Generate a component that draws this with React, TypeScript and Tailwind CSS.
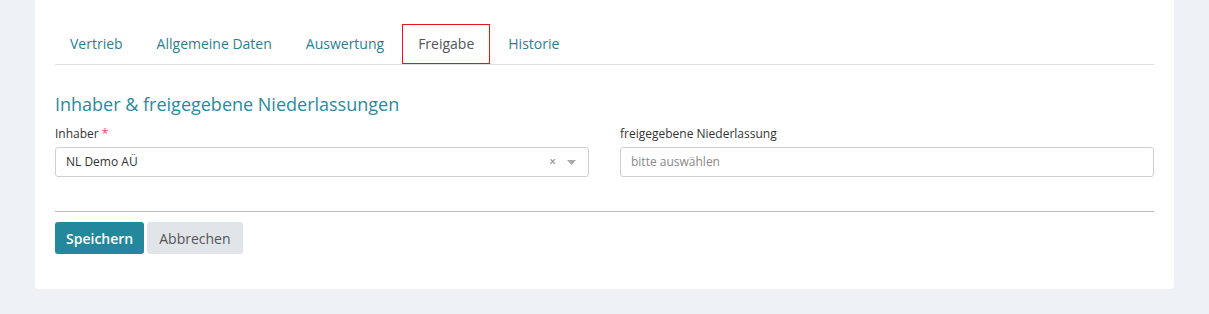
import React from 'react';

const tabs = ['Vertrieb', 'Allgemeine Daten', 'Auswertung', 'Freigabe', 'Historie'];

export default function App() {
  return (
    <div
      className="min-h-[314px] bg-[#eef1f5] px-[35px] pb-[25px]"
      style={{ fontFamily: '"Open Sans", "Liberation Sans", sans-serif' }}
    >
      <div className="bg-white rounded-b-[4px] px-[20px] pt-[24px] pb-[35px]">
        {/* tabs */}
        <ul className="flex border-b border-[#dcdfe3]">
          {tabs.map((t, i) => (
            <li key={t} className="mr-[2px]">
              {t === 'Freigabe' ? (
                <span className="block h-[40px] px-[15px] leading-[38px] text-[14px] text-[#555] border border-[#e8141b]">
                  {t}
                </span>
              ) : (
                <span
                  className={
                    'block h-[40px] pr-[16px] leading-[40px] text-[14px] text-[#2a7f93] ' +
                    (i === 0 ? 'pl-[15px]' : 'pl-[16px]')
                  }
                >
                  {t}
                </span>
              )}
            </li>
          ))}
        </ul>

        <h3 className="mt-[26px] text-[18px] leading-[26px] text-[#2a8aa0] font-normal">
          Inhaber &amp; freigegebene Niederlassungen
        </h3>

        <div className="mt-[8px] grid grid-cols-2 gap-[31px]">
          <div>
            <label className="block text-[12px] leading-[17px] text-[#333] mb-[5px]">
              Inhaber <span className="text-[#e8475a]">*</span>
            </label>
            <div className="h-[30px] rounded-[3px] border border-[#ccd0d5] flex items-center pl-[10px] pr-[10px]">
              <span className="flex-1 text-[12px] text-[#333]">NL Demo AÜ</span>
              <span className="text-[12px] font-semibold text-[#999] mr-[11px]">×</span>
              <svg width="9" height="5" viewBox="0 0 9 5" className="mr-[2px]">
                <path d="M0 0 L9 0 L4.5 5 Z" fill="#aaa" />
              </svg>
            </div>
          </div>
          <div>
            <label className="block text-[12px] leading-[17px] text-[#333] mb-[5px]">
              freigegebene Niederlassung
            </label>
            <div className="h-[30px] rounded-[3px] border border-[#ccd0d5] flex items-center pl-[10px]">
              <span className="text-[12px] text-[#888]">bitte auswählen</span>
            </div>
          </div>
        </div>

        <hr className="mt-[34px] border-0 border-t border-[#bbbbbb]" />

        <div className="mt-[10px] flex gap-[3px]">
          <button className="h-[32px] px-[11px] rounded-[3px] bg-[#23889c] text-white text-[14px] font-semibold">
            Speichern
          </button>
          <button className="h-[32px] px-[12px] rounded-[3px] bg-[#e1e5ea] text-[#555] text-[14px]">
            Abbrechen
          </button>
        </div>
      </div>
    </div>
  );
}
